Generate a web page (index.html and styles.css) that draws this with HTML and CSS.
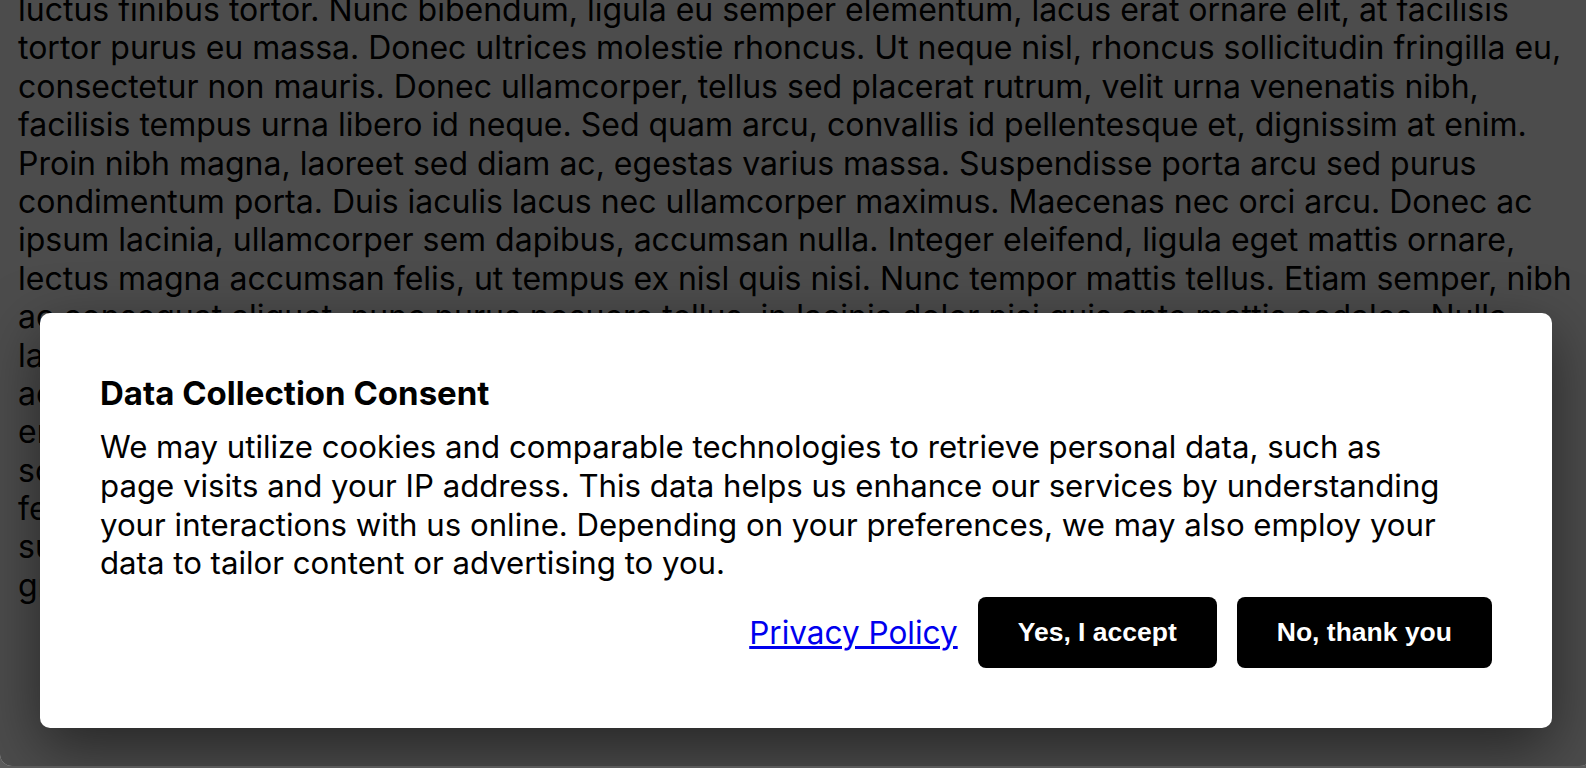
FILE: index.html
```html
<!DOCTYPE html>
<html lang="en">
<head>
    <meta charset="UTF-8">
    <meta name="viewport" content="width=device-width, initial-scale=1.0">
    <title>Data Collection Consent</title>
    <link rel="stylesheet" href="styles.css">
</head>
<body>
    <div class="window">
        <!-- Page content behind the dialog, scrolled down a bit -->
        <main class="article">
            <p>luctus finibus tortor. Nunc bibendum, ligula eu semper elementum, lacus erat ornare elit, at facilisis tortor purus eu massa. Donec ultrices molestie rhoncus. Ut neque nisl, rhoncus sollicitudin fringilla eu, consectetur non mauris. Donec ullamcorper, tellus sed placerat rutrum, velit urna venenatis nibh, facilisis tempus urna libero id neque. Sed quam arcu, convallis id pellentesque et, dignissim at enim. Proin nibh magna, laoreet sed diam ac, egestas varius massa. Suspendisse porta arcu sed purus condimentum porta. Duis iaculis lacus nec ullamcorper maximus. Maecenas nec orci arcu. Donec ac ipsum lacinia, ullamcorper sem dapibus, accumsan nulla. Integer eleifend, ligula eget mattis ornare, lectus magna accumsan felis, ut tempus ex nisl quis nisi. Nunc tempor mattis tellus. Etiam semper, nibh ac consequat aliquet, nunc purus posuere tellus, in lacinia dolor nisi quis ante mattis sodales. Nulla lacinia, nulla ac luctus pulvinar, purus velit faucibus lectus, eu viverra erat ante vitae nisl. Aenean et accumsan purus. Praesent vehicula lorem quis justo egestas, eget tincidunt nibh hendrerit. Nam sed erat ac nulla molestie ultrices, vestibulum at ante ipsum primis in faucibus orci luctus et ultrices nisl sollicitudin orci, in pulvinar augue vulputate at id. Integer id mauris vel magna suscipit tempor sed a felis. Curabitur porttitor justo ac ornare laoreet. Aliquam erat volutpat. Morbi sed sem vel neque nibh suscipit fermentum. Nulla facilisi. Pellentesque habitant morbi tristique senectus et netus ac turpis gravida sem.</p>
        </main>

        <!-- Consent dialog -->
        <div class="overlay">
            <div class="dialog" role="dialog" aria-labelledby="consentTitle">
                <h2 id="consentTitle">Data Collection Consent</h2>
                <p>We may utilize cookies and comparable technologies to retrieve personal data, such as<br>
                    page visits and your IP address. This data helps us enhance our services by understanding your interactions with us online. Depending on your preferences, we may also employ your data to tailor content or advertising to you.</p>
                <div class="actions">
                    <a href="#">Privacy Policy</a>
                    <button type="button">Yes, I accept</button>
                    <button type="button">No, thank you</button>
                </div>
            </div>
        </div>
    </div>
</body>
</html>
```

FILE: styles.css
```css
body {
    margin: 0;
    overflow: hidden;
    background-color: #5a5a5a;
    font-family: Inter, "Noto Sans", sans-serif;
}
.window {
    position: relative;
    width: 1592px;
    height: 766px;
    overflow: hidden;
    background-color: #fff;
    border-radius: 0 0 12px 12px;
}
.article {
    padding: 0 18px;
    margin-top: -9px;
    font-size: 32px;
    line-height: 1.2;
    color: #000;
}
.article p {
    margin: 0;
}
.overlay {
    position: absolute;
    inset: 0;
    display: flex;
    align-items: flex-end;
    padding: 40px 40px 38px;
    background-color: rgba(0, 0, 0, 0.7);
}
.dialog {
    flex: 1;
    padding: 61px 60px 60px;
    background-color: #fff;
    border-radius: 10px;
    box-shadow: 0 20px 60px rgba(0, 0, 0, 0.5);
}
.dialog h2 {
    margin: 0 0 14px;
    font-size: 33px;
    font-weight: 700;
    line-height: 1.2;
}
.dialog p {
    margin: 0;
    font-size: 31.2px;
    line-height: 38.75px;
}
.actions {
    display: flex;
    justify-content: flex-end;
    align-items: center;
    gap: 20px;
    margin-top: 14px;
}
.actions a {
    font-size: 31.5px;
    line-height: 1.2;
    color: #0000ee;
}
.actions button {
    padding: 20px 40px;
    border: none;
    border-radius: 8px;
    background-color: #000;
    color: #fff;
    font-family: "Liberation Sans", Arial, sans-serif;
    font-size: 26.5px;
    font-weight: 700;
}
```
